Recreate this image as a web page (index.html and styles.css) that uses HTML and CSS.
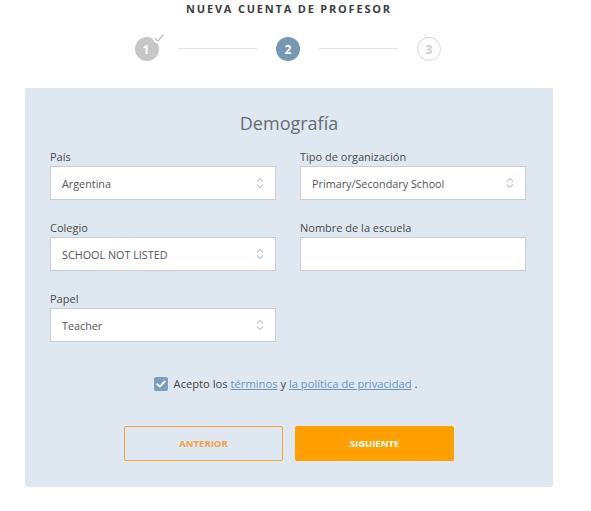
FILE: index.html
```html
<!DOCTYPE html>
<html lang="es">
<head>
<meta charset="utf-8">
<link rel="stylesheet" href="styles.css">
</head>
<body>
<div class="page">
  <h1 class="heading">NUEVA CUENTA DE PROFESOR</h1>
  <div class="steps">
    <div class="step done">
      <span class="num">1</span>
      <svg class="check" width="14" height="12" viewBox="0 0 14 12"><path d="M3 6.5 L6 9 L11 3" fill="none" stroke="#c7c7c7" stroke-width="1.6" stroke-linecap="round" stroke-linejoin="round"/></svg>
    </div>
    <div class="line"></div>
    <div class="step current"><span class="num">2</span></div>
    <div class="line"></div>
    <div class="step todo"><span class="num">3</span></div>
  </div>
  <div class="panel">
    <h2 class="title">Demografía</h2>
    <div class="grid">
      <div class="field">
        <label class="label">País</label>
        <div class="select">Argentina<svg class="arrows" width="10" height="14" viewBox="0 0 10 14"><path d="M2 5.5 L5 2.5 L8 5.5 M2 8.5 L5 11.5 L8 8.5" fill="none" stroke="#c4c8cc" stroke-width="1.1"/></svg></div>
      </div>
      <div class="field">
        <label class="label">Tipo de organización</label>
        <div class="select">Primary/Secondary School<svg class="arrows" width="10" height="14" viewBox="0 0 10 14"><path d="M2 5.5 L5 2.5 L8 5.5 M2 8.5 L5 11.5 L8 8.5" fill="none" stroke="#c4c8cc" stroke-width="1.1"/></svg></div>
      </div>
      <div class="field">
        <label class="label">Colegio</label>
        <div class="select">SCHOOL NOT LISTED<svg class="arrows" width="10" height="14" viewBox="0 0 10 14"><path d="M2 5.5 L5 2.5 L8 5.5 M2 8.5 L5 11.5 L8 8.5" fill="none" stroke="#c4c8cc" stroke-width="1.1"/></svg></div>
      </div>
      <div class="field">
        <label class="label">Nombre de la escuela</label>
        <div class="input"></div>
      </div>
      <div class="field">
        <label class="label">Papel</label>
        <div class="select">Teacher<svg class="arrows" width="10" height="14" viewBox="0 0 10 14"><path d="M2 5.5 L5 2.5 L8 5.5 M2 8.5 L5 11.5 L8 8.5" fill="none" stroke="#c4c8cc" stroke-width="1.1"/></svg></div>
      </div>
    </div>
    <div class="agree">
      <span class="box"><svg width="10" height="8" viewBox="0 0 10 8"><path d="M1.2 4.2 L3.8 6.6 L8.8 1.4" fill="none" stroke="#fff" stroke-width="1.8" stroke-linecap="round" stroke-linejoin="round"/></svg></span>
      <span class="agree-text">Acepto los <a href="#">términos</a> y <a href="#">la política de privacidad</a> .</span>
    </div>
    <div class="buttons">
      <button class="btn prev">ANTERIOR</button>
      <button class="btn next">SIGUIENTE</button>
    </div>
  </div>
</div>
</body>
</html>
```
FILE: styles.css
```css
* { box-sizing: border-box; }
body {
  margin: 0;
  background: #fff;
  font-family: "Open Sans", "Liberation Sans", sans-serif;
  color: #444;
}
.page {
  width: 576px;
  padding-top: 2px;
}
.heading {
  margin: 0;
  text-align: center;
  font-size: 11px;
  font-weight: 700;
  letter-spacing: 1.8px;
  color: #3d3d3d;
  line-height: 14px;
  padding-left: 2px;
}
.steps {
  margin-top: 21px;
  display: flex;
  align-items: center;
  justify-content: center;
}
.step {
  width: 24px;
  height: 24px;
  border-radius: 50%;
  display: flex;
  align-items: center;
  justify-content: center;
  position: relative;
  font-size: 12px;
  font-weight: 700;
  line-height: 1;
}
.step .num { display: block; margin-top: 1px; }
.step.done { background: #c7c7c7; color: #fff; }
.step.done .num { margin-left: -2px; }
.step.done .check {
  position: absolute;
  top: -5px;
  right: -7px;
  background: #fff;
  border-radius: 0 0 0 8px;
}
.step.current { background: #7698b2; color: #fff; }
.step.todo { background: #fff; border: 1px solid #d6d6d6; color: #cfcfcf; }
.line {
  width: 79px;
  height: 1px;
  background: #e4e4e4;
  margin: 0 19px 2px 19px;
}
.panel {
  margin: 27px 0 0 25px;
  width: 528px;
  height: 399px;
  background: #dfe8f1;
  border-radius: 2px;
  padding: 23px 28px 0 25px;
}
.title {
  margin: 0;
  text-align: center;
  font-size: 18px;
  font-weight: 400;
  color: #676c71;
  line-height: 24px;
  padding-left: 3px;
}
.grid {
  margin-top: 15px;
  display: grid;
  grid-template-columns: 226px 226px;
  column-gap: 24px;
  row-gap: 21px;
}
.label {
  display: block;
  font-size: 11px;
  line-height: 14px;
  color: #4a4a4a;
  margin-bottom: 2px;
}
.select, .input {
  height: 34px;
  background: #fff;
  border: 1px solid #c9cdd2;
  display: flex;
  align-items: center;
  justify-content: space-between;
  padding: 0 10px 0 11px;
  font-size: 10.8px;
  color: #555;
}
.arrows { display: block; }
.agree {
  margin-top: 35px;
  display: flex;
  align-items: center;
  justify-content: center;
  padding-right: 4px;
  gap: 6px;
}
.box {
  width: 14px;
  height: 14px;
  background: #7d9fbc;
  border-radius: 2px;
  display: flex;
  align-items: center;
  justify-content: center;
}
.agree-text {
  font-size: 11.2px;
  color: #444;
  line-height: 14px;
}
.agree-text a { color: #6a96b8; }
.buttons {
  margin-top: 35px;
  display: flex;
  justify-content: center;
  gap: 12px;
  padding-left: 3px;
}
.btn {
  width: 159px;
  height: 35px;
  border-radius: 2px;
  font-family: "Open Sans", "Liberation Sans", sans-serif;
  font-size: 9.5px;
  font-weight: 700;
  cursor: pointer;
}
.btn.prev { background: transparent; border: 1px solid #f3a442; color: #f2a041; }
.btn.next { background: #ffa000; border: 1px solid #ffa000; color: #fff; }
```
